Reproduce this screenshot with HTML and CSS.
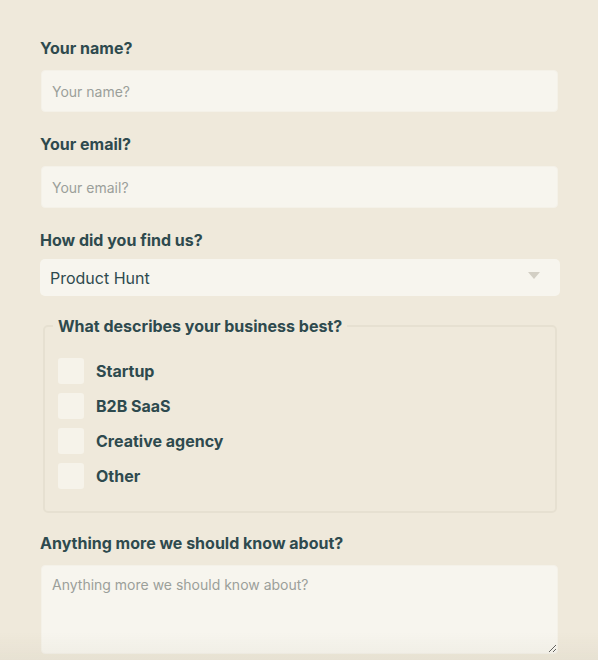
FILE: index.html
```html
<!DOCTYPE html>
<html lang="en">
<head>
<meta charset="utf-8">
<title>Form</title>
<link rel="stylesheet" href="styles.css">
</head>
<body>
<form class="form">
  <label class="label" for="name">Your name?</label>
  <input class="field" id="name" type="text" placeholder="Your name?">

  <label class="label" for="email">Your email?</label>
  <input class="field" id="email" type="email" placeholder="Your email?">

  <label class="label label-select" for="find">How did you find us?</label>
  <div class="select">
    <span class="select-value">Product Hunt</span>
    <svg class="select-arrow" width="12" height="7" viewBox="0 0 12 7"><path d="M0 0H12L6 7Z" fill="#d3cfc4"/></svg>
  </div>

  <fieldset class="group">
    <legend class="legend">What describes your business best?</legend>
    <div class="options">
      <label class="option"><span class="box"></span>Startup</label>
      <label class="option"><span class="box"></span>B2B SaaS</label>
      <label class="option"><span class="box"></span>Creative agency</label>
      <label class="option"><span class="box"></span>Other</label>
    </div>
  </fieldset>

  <label class="label" for="more">Anything more we should know about?</label>
  <textarea class="field area" id="more" placeholder="Anything more we should know about?"></textarea>
</form>
<div class="fade"></div>
</body>
</html>
```
FILE: styles.css
```css
html, body {
  margin: 0;
  padding: 0;
  background: #efe9db;
}
body {
  font-family: Inter, "Noto Sans", sans-serif;
  color: #2e4a4e;
  min-height: 660px;
}
.form {
  display: flex;
  flex-direction: column;
  padding: 36px 38px 0 40px;
  width: 520px;
}
.label {
  display: block;
  font-size: 16px;
  line-height: 24px;
  font-weight: 700;
  color: #2e4a4e;
  margin-bottom: 10px;
}
.label-select {
  margin-bottom: 7px;
}
.field {
  box-sizing: border-box;
  width: 517px;
  height: 42px;
  margin: 0 0 20px 1px;
  padding: 0 10px;
  border: 1px solid #f4f1e8;
  border-radius: 4px;
  background: #f7f5ee;
  font-family: Inter, "Noto Sans", sans-serif;
  font-size: 14px;
  color: #2e4a4e;
  outline: none;
}
.field::placeholder {
  color: #9b9f9a;
}
.select {
  box-sizing: border-box;
  width: 520px;
  height: 37px;
  display: flex;
  align-items: center;
  justify-content: space-between;
  padding: 0 20px 0 10px;
  background: #f7f5ee;
  border-radius: 5px;
  font-size: 16px;
  color: #2e4a4e;
}
.select-arrow {
  margin-top: -4px;
}
.group {
  margin: 18px 3px 18px 3px;
  padding: 20px 13px 22px 13px;
  border: 2px solid #e6e0d1;
  border-radius: 5px;
  min-width: 0;
}
.legend {
  margin-left: -5px;
  padding: 0 5px;
  font-size: 16px;
  line-height: 24px;
  font-weight: 700;
  color: #2e4a4e;
}
.options {
  display: flex;
  flex-direction: column;
  gap: 9px;
}
.option {
  display: flex;
  align-items: center;
  gap: 12px;
  height: 26px;
  font-size: 16px;
  font-weight: 700;
  color: #2e4a4e;
}
.box {
  width: 26px;
  height: 26px;
  border-radius: 3px;
  background: #f6f3ea;
  flex: none;
}
.area {
  height: 89px;
  padding: 9px 10px;
  line-height: 20px;
  margin-bottom: 0;
  resize: vertical;
}
.fade {
  position: fixed;
  left: 0;
  right: 0;
  bottom: 0;
  height: 28px;
  background: linear-gradient(to bottom, rgba(120, 110, 80, 0), rgba(120, 110, 80, 0.06));
  pointer-events: none;
}
```
